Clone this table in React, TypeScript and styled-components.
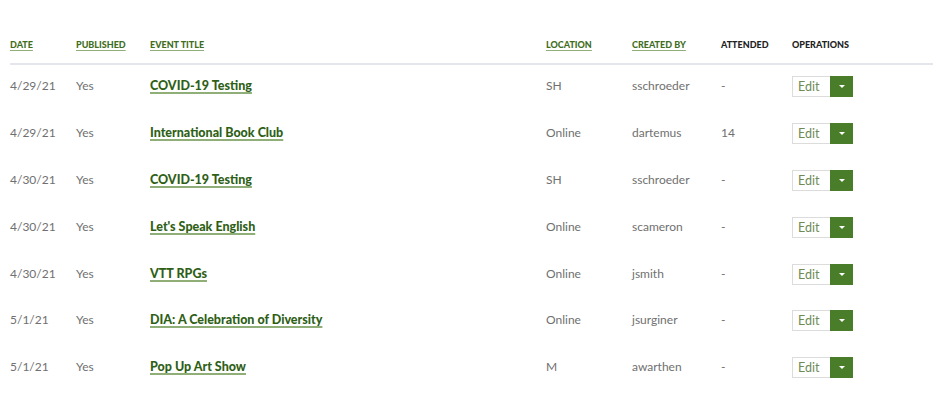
import React from "react";
import styled, { createGlobalStyle } from "styled-components";

const Global = createGlobalStyle`
  html, body { margin: 0; padding: 0; background: #fff; }
  body { font-family: Lato, "Open Sans", "Liberation Sans", sans-serif; }
`;

const cols = "66px 74px 396px 86px 89px 71px 1fr";

const Wrap = styled.div`
  width: 923px;
  padding-left: 10px;
`;

const HeadRow = styled.div`
  display: grid;
  grid-template-columns: ${cols};
  height: 63px;
  align-items: end;
  border-bottom: 2px solid #e3e6ea;
`;

const HeadCell = styled.div<{ $link?: boolean }>`
  font-size: 9px;
  font-weight: 900;
  text-transform: uppercase;
  padding-bottom: 13px;
  color: ${(p) => (p.$link ? "#3f6e22" : "#222")};
  text-decoration: ${(p) => (p.$link ? "underline" : "none")};
  text-decoration-color: #8fae78;
  text-underline-offset: 2px;
`;

const Row = styled.div`
  display: grid;
  grid-template-columns: ${cols};
  height: 46.8px;
  align-items: center;
  padding-bottom: 5px;
  box-sizing: border-box;
`;

const Cell = styled.div`
  font-size: 12px;
  color: #707070;
`;

const Title = styled.a`
  font-size: 12.5px;
  font-weight: 900;
  color: #2f5f17;
  text-decoration: underline;
  text-decoration-color: #8fae78;
  text-decoration-thickness: 1.5px;
  text-underline-offset: 2px;
  cursor: pointer;
`;

const BtnGroup = styled.div`
  display: inline-flex;
  height: 21px;
  margin-top: 2px;
`;

const EditBtn = styled.button`
  width: 38px;
  height: 21px;
  box-sizing: border-box;
  border: 1px solid #dcdcdc;
  border-right: none;
  background: #fff;
  color: #6f8a55;
  font-family: inherit;
  font-size: 12.5px;
  text-align: left;
  padding: 0 0 0 5px;
`;

const Toggle = styled.button`
  width: 23px;
  height: 21px;
  border: none;
  background: #4a7d2a;
  display: flex;
  align-items: center;
  justify-content: center;
  padding: 0;
`;

const Caret = styled.span`
  width: 0;
  height: 0;
  border-left: 3.5px solid transparent;
  border-right: 3.5px solid transparent;
  border-top: 3.5px solid #fff;
`;

const rows = [
  ["4/29/21", "Yes", "COVID-19 Testing", "SH", "sschroeder", "-"],
  ["4/29/21", "Yes", "International Book Club", "Online", "dartemus", "14"],
  ["4/30/21", "Yes", "COVID-19 Testing", "SH", "sschroeder", "-"],
  ["4/30/21", "Yes", "Let's Speak English", "Online", "scameron", "-"],
  ["4/30/21", "Yes", "VTT RPGs", "Online", "jsmith", "-"],
  ["5/1/21", "Yes", "DIA: A Celebration of Diversity", "Online", "jsurginer", "-"],
  ["5/1/21", "Yes", "Pop Up Art Show", "M", "awarthen", "-"],
];

export default function App() {
  return (
    <Wrap>
      <Global />
      <HeadRow>
        <HeadCell $link>Date</HeadCell>
        <HeadCell $link>Published</HeadCell>
        <HeadCell $link>Event Title</HeadCell>
        <HeadCell $link>Location</HeadCell>
        <HeadCell $link>Created By</HeadCell>
        <HeadCell>Attended</HeadCell>
        <HeadCell>Operations</HeadCell>
      </HeadRow>
      {rows.map((r, i) => (
        <Row key={i}>
          <Cell>{r[0]}</Cell>
          <Cell>{r[1]}</Cell>
          <Cell>
            <Title>{r[2]}</Title>
          </Cell>
          <Cell>{r[3]}</Cell>
          <Cell>{r[4]}</Cell>
          <Cell>{r[5]}</Cell>
          <Cell>
            <BtnGroup>
              <EditBtn>Edit</EditBtn>
              <Toggle>
                <Caret />
              </Toggle>
            </BtnGroup>
          </Cell>
        </Row>
      ))}
    </Wrap>
  );
}
